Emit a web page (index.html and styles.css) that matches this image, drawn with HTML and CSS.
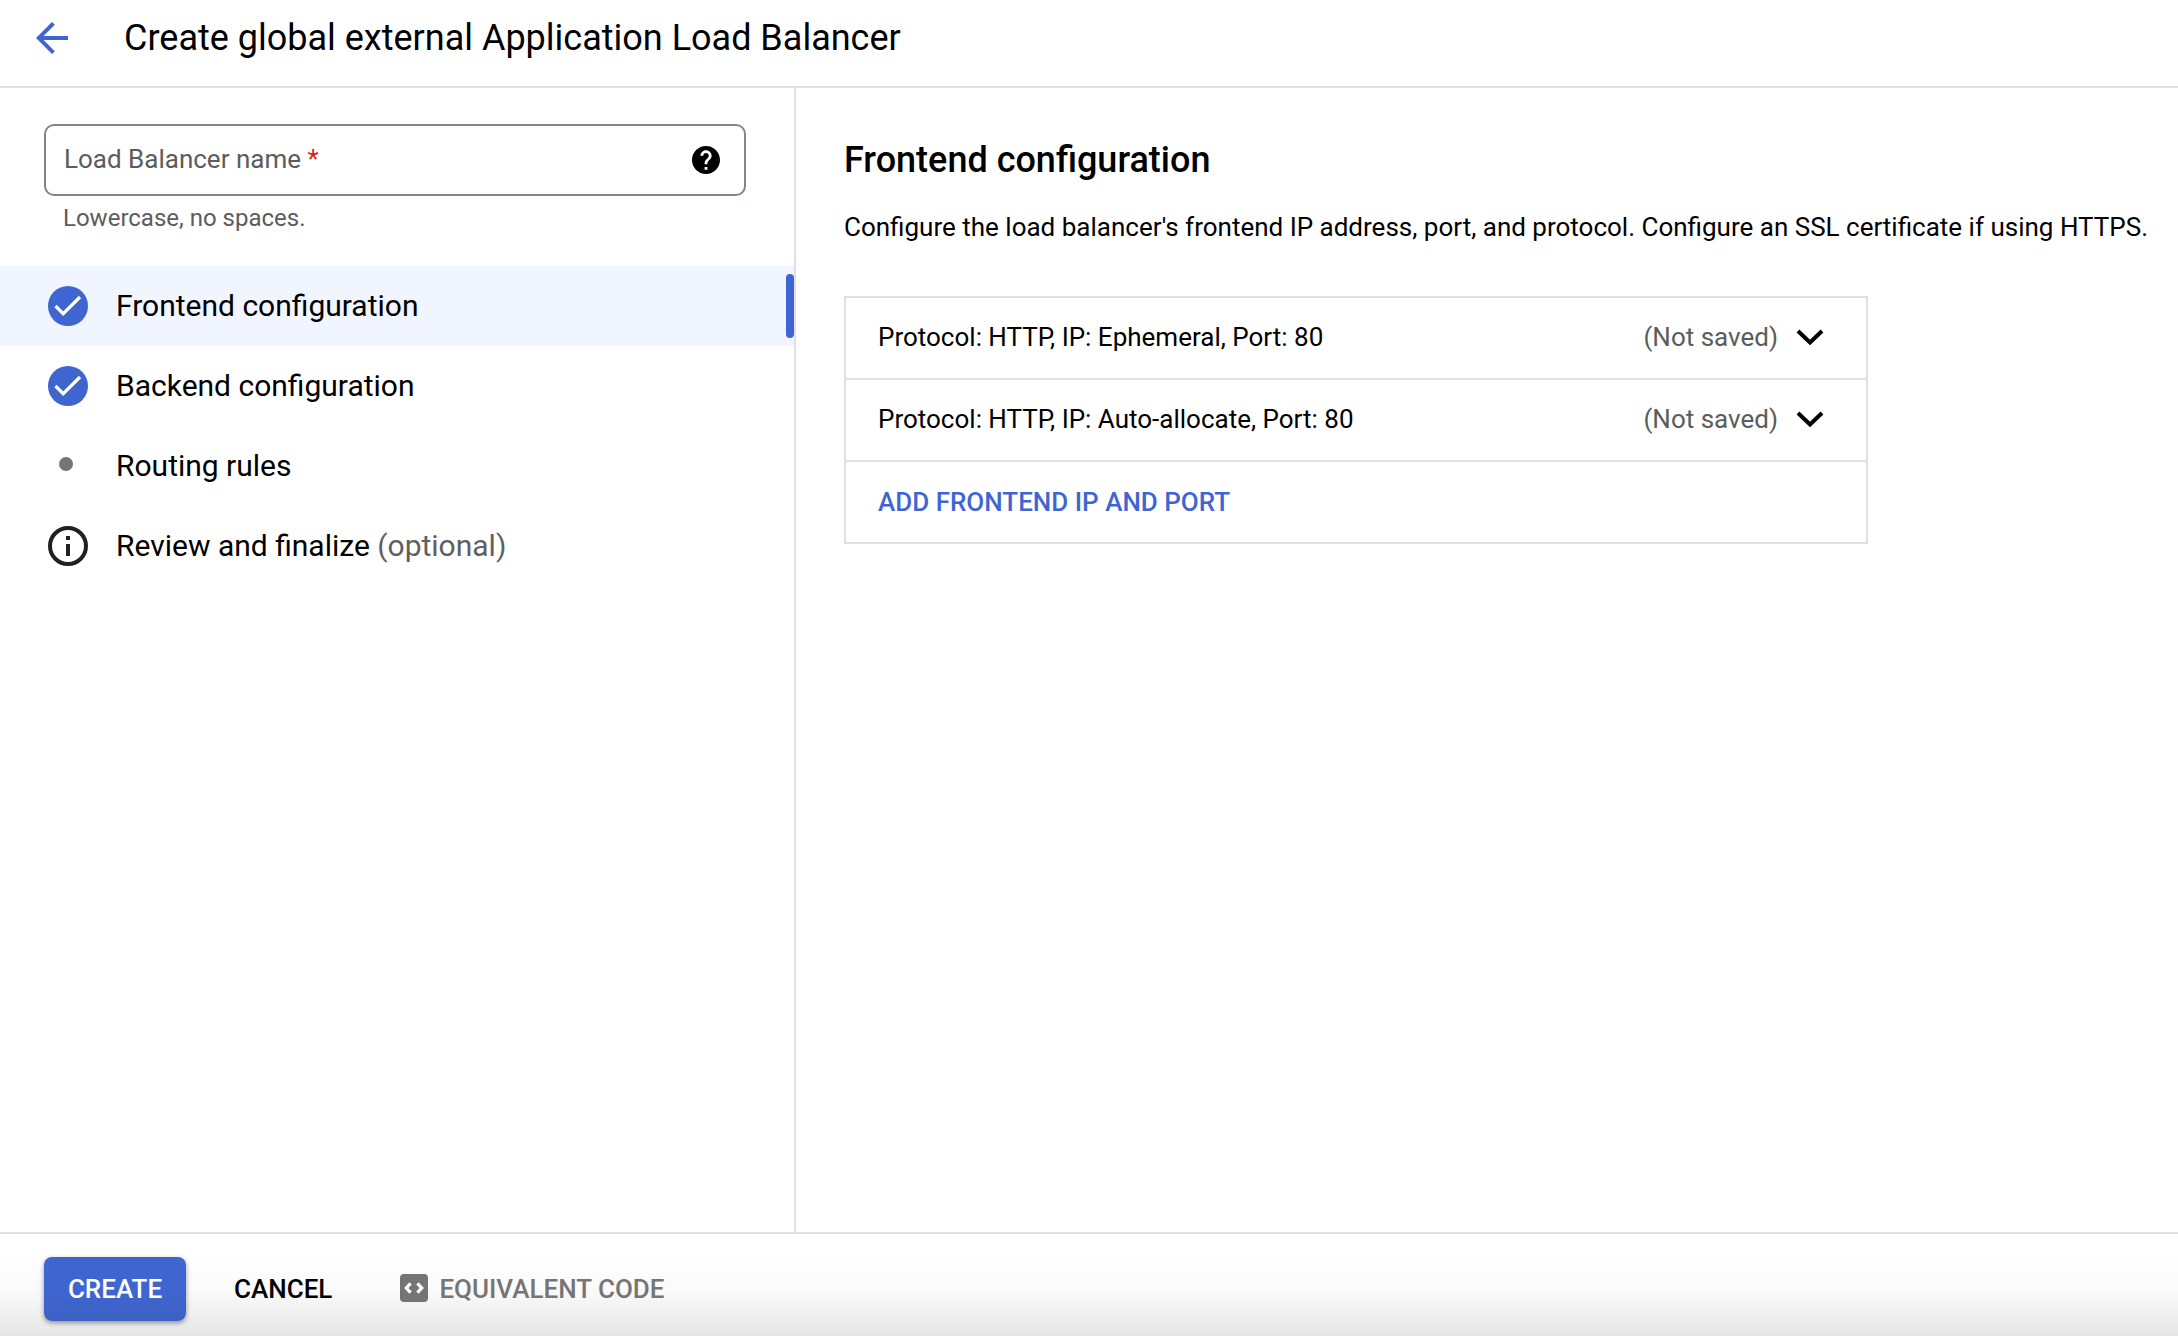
FILE: index.html
```html
<!DOCTYPE html>
<html lang="en">
<head>
<meta charset="utf-8">
<title>Create global external Application Load Balancer</title>
<link rel="stylesheet" href="styles.css">
</head>
<body>
<header class="topbar">
  <svg class="back" viewBox="0 0 32 32" aria-label="Back"><path d="M32 14v4H7.6l11.2 11.2L16 32 0 16 16 0l2.8 2.8L7.6 14z"/></svg>
  <h1 class="page-title">Create global external Application Load Balancer</h1>
</header>
<main class="body">
  <nav class="sidebar">
    <div class="name-field">
      <label class="name-label">Load Balancer name <span class="required">*</span></label>
      <svg class="help" viewBox="2 2 20 20"><path d="M12 2C6.48 2 2 6.48 2 12s4.48 10 10 10 10-4.480 10-10S17.520 2 12 2zm1 17h-2v-2h2v2zm2.070-7.750l-.9.920C13.450 12.900 13 13.500 13 15h-2v-.5c0-1.100.450-2.100 1.170-2.830l1.240-1.260c.370-.360.590-.860.590-1.410 0-1.100-.9-2-2-2s-2 .9-2 2H8c0-2.210 1.790-4 4-4s4 1.790 4 4c0 .880-.360 1.680-.930 2.250z"/></svg>
    </div>
    <p class="hint">Lowercase, no spaces.</p>
    <ul class="steps">
      <li class="step step-active">
        <svg class="step-icon" viewBox="0 0 40 40"><circle cx="20" cy="20" r="20" fill="#3f66d0"/><path d="M7.500 20l7.700 7.700L32 11" fill="none" stroke="#fff" stroke-width="3.200"/></svg>
        <span>Frontend configuration</span>
      </li>
      <li class="step">
        <svg class="step-icon" viewBox="0 0 40 40"><circle cx="20" cy="20" r="20" fill="#3f66d0"/><path d="M7.500 20l7.700 7.700L32 11" fill="none" stroke="#fff" stroke-width="3.200"/></svg>
        <span>Backend configuration</span>
      </li>
      <li class="step">
        <svg class="step-icon" viewBox="0 0 40 40"><circle cx="18" cy="18" r="7" fill="#757575"/></svg>
        <span>Routing rules</span>
      </li>
      <li class="step">
        <svg class="step-icon" viewBox="0 0 40 40"><circle cx="20" cy="20" r="18" fill="none" stroke="#212121" stroke-width="4"/><path d="M18 10h4v4h-4zM18 18h4v12h-4z" fill="#212121"/></svg>
        <span>Review and finalize <span class="optional">(optional)</span></span>
      </li>
    </ul>
  </nav>
  <section class="content">
    <h2 class="section-title">Frontend configuration</h2>
    <p class="description">Configure the load balancer's frontend IP address, port, and protocol. Configure an SSL certificate if using HTTPS.</p>
    <div class="panel">
      <div class="row entry">
        <span>Protocol: HTTP, IP: Ephemeral, Port: 80</span>
        <span class="status">(Not saved)</span>
        <svg class="chevron" viewBox="0 0 28 16"><path d="M2 2l12 11.500L26 2" fill="none" stroke="#000" stroke-width="4"/></svg>
      </div>
      <div class="row entry">
        <span>Protocol: HTTP, IP: Auto-allocate, Port: 80</span>
        <span class="status">(Not saved)</span>
        <svg class="chevron" viewBox="0 0 28 16"><path d="M2 2l12 11.500L26 2" fill="none" stroke="#000" stroke-width="4"/></svg>
      </div>
      <div class="row"><a class="add">ADD FRONTEND IP AND PORT</a></div>
    </div>
  </section>
</main>
<footer class="actions">
  <button class="btn create">CREATE</button>
  <button class="btn cancel">CANCEL</button>
  <button class="btn code">
    <svg class="code-icon" viewBox="0 0 28 28"><rect width="28" height="28" rx="4" fill="#757575"/><path d="M10.600 9.400L6.300 14l4.300 4.600M17.400 9.400l4.300 4.600-4.300 4.600" fill="none" stroke="#fff" stroke-width="3.200"/></svg>
    <span>EQUIVALENT CODE</span>
  </button>
</footer>
</body>
</html>
```

FILE: styles.css
```css
* { box-sizing: border-box; }
body {
  margin: 0;
  height: 1336px;
  display: flex;
  flex-direction: column;
  overflow: hidden;
  background: #fff;
  color: #000;
  font: 26px/40px Roboto, sans-serif;
}
h1, h2, p, ul { margin: 0; padding: 0; }
svg { display: block; flex: none; }

.topbar {
  height: 88px;
  padding: 0 0 10px 36px;
  display: flex;
  align-items: center;
  gap: 56px;
  border-bottom: 2px solid #e0e0e0;
}
.back { width: 32px; height: 32px; fill: #3f66d0; }
.page-title { font-size: 36px; font-weight: 400; }

.body { flex: 1; display: flex; min-height: 0; }
.sidebar { width: 796px; flex: none; padding-top: 36px; border-right: 2px solid #e0e0e0; }
.name-field {
  width: 702px;
  height: 72px;
  margin-left: 44px;
  padding: 0 24px 0 18px;
  display: flex;
  align-items: center;
  justify-content: space-between;
  border: 2px solid #80868b;
  border-radius: 10px;
}
.name-label { padding-bottom: 2px; color: #5c5c5c; }
.required { color: #d2261d; }
.help { width: 28px; height: 28px; }
.hint { padding: 2px 0 0 63px; color: #5c5c5c; font-size: 24px; }

.steps { list-style: none; margin-top: 28px; }
.step {
  height: 80px;
  padding-left: 48px;
  display: flex;
  align-items: center;
  gap: 28px;
  font-size: 30px;
}
.step-active { background: #f0f5ff; }
.step-active::after {
  content: "";
  width: 8px;
  height: 64px;
  margin-left: auto;
  border-radius: 4px;
  background: #3f66d0;
}
.step-icon { width: 40px; height: 40px; }
.optional { color: #5f5f5f; }

.content { flex: 1; padding: 52px 0 0 48px; }
.section-title { font-size: 36px; font-weight: 500; }
.description { margin-top: 27px; white-space: nowrap; }
.panel { width: 1024px; margin-top: 49px; border: 2px solid #e0e0e0; }
.row { height: 80px; padding: 0 42px 0 32px; display: flex; align-items: center; }
.row + .row { height: 82px; border-top: 2px solid #e0e0e0; }
.entry { padding-bottom: 2px; }
.status { margin-left: auto; color: #5c5c5c; }
.chevron { width: 28px; height: 16px; margin-left: 18px; }
.add { color: #3f66d0; font-weight: 500; }

.actions {
  height: 104px;
  padding: 23px 44px 0;
  display: flex;
  align-items: flex-start;
  border-top: 2px solid #e0e0e0;
  background: linear-gradient(#fff 20%, #fafafa 55%, #e6e6e6);
}
.btn {
  height: 64px;
  padding: 0;
  border: 0;
  background: none;
  color: #000;
  font: 500 26px/62px Roboto, sans-serif;
}
.create {
  width: 142px;
  border-radius: 8px;
  background: linear-gradient(#3f66d0 50%, #3c60c3);
  box-shadow: 0 2px 5px rgba(0, 0, 0, .4);
  color: #fff;
}
.cancel { margin-left: 48px; }
.code { margin-left: 68px; display: flex; align-items: center; gap: 11px; color: #757575; }
.code-icon { width: 28px; height: 28px; margin-bottom: 2px; }
```
